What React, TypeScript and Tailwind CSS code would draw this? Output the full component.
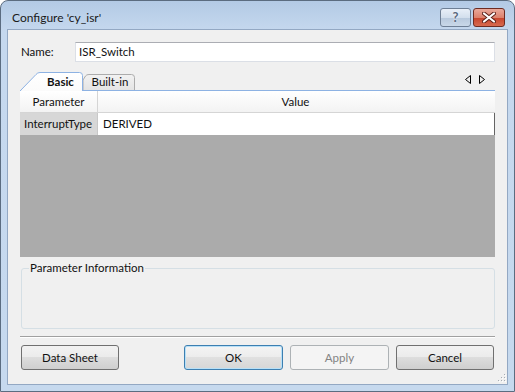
import React from "react";

function Grip() {
  const pts = [
    [7, 1],
    [7, 4],
    [4, 4],
    [7, 7],
    [4, 7],
    [1, 7],
  ];
  return (
    <svg width="10" height="10" viewBox="0 0 10 10">
      {pts.map(([x, y], i) => (
        <g key={i}>
          <rect x={x + 1} y={y + 1} width="1" height="1" fill="#ffffff" />
          <rect x={x} y={y} width="1" height="1" fill="#a6acb3" />
        </g>
      ))}
    </svg>
  );
}

export default function App() {
  return (
    <div className="w-[515px] h-[392px] font-['Lato',sans-serif] text-[11.5px] leading-none text-[#111]">
      <div className="relative w-full h-full rounded-t-[8px] border border-[#5b6c80] bg-[linear-gradient(to_bottom,#b3cae5_0px,#c5d8ee_30px,#c6d9ee_100%)] flex flex-col">
        {/* Title bar */}
        <div className="h-[28px] flex items-center pt-[5px] pl-[11px] pr-[9px]">
          <span className="flex-1 text-[12px] text-[#1a1a1a]">Configure 'cy_isr'</span>
          <div className="flex gap-[2px] items-center">
            <div className="w-[31px] h-[19px] rounded-[3px] border border-[#6e7f95] bg-[linear-gradient(to_bottom,#e8eff8_0%,#d3dfed_50%,#b7c8dc_51%,#c9d8e9_100%)] flex items-center justify-center text-[13px] font-bold text-[#5a6a80] [text-shadow:0_0_2px_#ffffff]">
              ?
            </div>
            <div className="w-[32px] h-[19px] rounded-[3px] border border-[#6e2b21] bg-[linear-gradient(to_bottom,#eaa99b_0%,#dd826d_50%,#c7442c_51%,#d76a4f_100%)] flex items-center justify-center">
              <svg width="14" height="11" viewBox="0 0 14 11">
                <path d="M2,1.5 L12,9.5 M12,1.5 L2,9.5" stroke="#5b2018" strokeWidth="4" strokeLinecap="round" />
                <path d="M2,1.5 L12,9.5 M12,1.5 L2,9.5" stroke="#ffffff" strokeWidth="2.2" strokeLinecap="round" />
              </svg>
            </div>
          </div>
        </div>

        {/* Client area */}
        <div className="relative flex-1 mx-[6px] mb-[6px] border border-[#93a8c3] bg-[#f0f0f0] flex flex-col px-[12px]">
          {/* Name row */}
          <div className="mt-[12px] flex items-center h-[20px]">
            <span className="w-[55px] pl-[1px]">Name:</span>
            <div className="flex-1 h-[20px] border border-[#dbdfe6] border-t-[#abadb3] bg-white flex items-center pl-[3px]">
              ISR_Switch
            </div>
          </div>

          {/* Tab strip */}
          <div className="mt-[10px] h-[19px] flex items-end border-b border-[#8db2e3]">
            <div className="relative z-10 w-[63px] h-[19px] mb-[-1px] flex items-center justify-center pl-[20px] pr-[2px] font-bold">
              <svg className="absolute inset-0" width="63" height="19" viewBox="0 0 63 19">
                <defs>
                  <linearGradient id="tb" x1="0" y1="0" x2="0" y2="1">
                    <stop offset="0" stopColor="#ffffff" />
                    <stop offset="1" stopColor="#fbfbfb" />
                  </linearGradient>
                </defs>
                <path
                  d="M0.5,19 L16,2.5 Q17.5,0.5 20,0.5 L59.5,0.5 Q62.5,0.5 62.5,3.5 L62.5,19 Z"
                  fill="url(#tb)"
                />
                <path
                  d="M0.5,18.5 L16,2.5 Q17.5,0.5 20,0.5 L59.5,0.5 Q62.5,0.5 62.5,3.5 L62.5,19"
                  fill="none"
                  stroke="#8db2e3"
                />
              </svg>
              <span className="relative">Basic</span>
            </div>
            <div className="relative w-[52px] h-[16px] flex items-center justify-center pl-[2px]">
              <svg className="absolute inset-0" width="52" height="16" viewBox="0 0 52 16">
                <defs>
                  <linearGradient id="tg" x1="0" y1="0" x2="0" y2="1">
                    <stop offset="0" stopColor="#f2f2f2" />
                    <stop offset="1" stopColor="#e4e4e4" />
                  </linearGradient>
                </defs>
                <path
                  d="M0,16 L0,6 L2.5,2 Q3.5,0.5 6,0.5 L48.5,0.5 Q51.5,0.5 51.5,3.5 L51.5,16"
                  fill="url(#tg)"
                  stroke="#acacac"
                />
              </svg>
              <span className="relative">Built-in</span>
            </div>
            <div className="flex-1" />
            <div className="flex items-center gap-[8px] mb-[6px] mr-[10px]">
              <svg width="6" height="9" viewBox="0 0 6 9">
                <path d="M5.5,0.5 L0.5,4.5 L5.5,8.5 Z" fill="none" stroke="#000" strokeWidth="1" />
              </svg>
              <svg width="6" height="9" viewBox="0 0 6 9">
                <path d="M0.5,0.5 L5.5,4.5 L0.5,8.5 Z" fill="none" stroke="#000" strokeWidth="1" />
              </svg>
            </div>
          </div>

          {/* Table */}
          <div className="h-[166px] flex flex-col bg-[#ababab]">
            <div className="h-[22px] flex bg-[linear-gradient(to_bottom,#ffffff,#f3f3f3)] border-b border-[#d5d5d5]">
              <div className="w-[78px] border-r border-[#d5d5d5] flex items-center justify-center">Parameter</div>
              <div className="flex-1 flex items-center justify-center pr-[2px]">Value</div>
            </div>
            <div className="h-[22px] flex">
              <div className="w-[78px] bg-[#d7d7d7] border-r border-[#c8c8c8] flex items-center pl-[4px]">InterruptType</div>
              <div className="flex-1 bg-white border-r border-[#646464] flex items-center pl-[5px]">DERIVED</div>
            </div>
            <div className="flex-1" />
          </div>

          {/* Parameter Information group */}
          <fieldset className="mt-[5px] h-[67px] border border-[#d5dfe5] rounded-[3px] ml-[1px] px-[7px]">
            <legend className="px-[1px] leading-[12px]">Parameter Information</legend>
          </fieldset>

          {/* Separator */}
          <div className="mt-[7px] h-[2px] border-t border-[#a0a0a0] border-b border-b-white" />

          {/* Buttons */}
          <div className="mt-[7px] flex items-center">
            <div className="ml-[1px] w-[98px] h-[25px] rounded-[3px] border border-[#707070] bg-[linear-gradient(to_bottom,#f2f2f2_0%,#ebebeb_50%,#dddddd_50%,#cfcfcf_100%)] flex items-center justify-center">
              Data Sheet
            </div>
            <div className="flex-1" />
            <div className="w-[99px] h-[25px] rounded-[3px] border border-[#3c7fb1] shadow-[inset_0_0_0_1px_#b8e0f7] bg-[linear-gradient(to_bottom,#f4f4f4_0%,#ececec_50%,#e0e0e0_50%,#d6d6d6_100%)] flex items-center justify-center">
              OK
            </div>
            <div className="ml-[7px] w-[99px] h-[25px] rounded-[3px] border border-[#adb2b5] bg-[#f4f4f4] text-[#838383] flex items-center justify-center">
              Apply
            </div>
            <div className="ml-[7px] mr-[1px] w-[98px] h-[25px] rounded-[3px] border border-[#707070] bg-[linear-gradient(to_bottom,#f2f2f2_0%,#ebebeb_50%,#dddddd_50%,#cfcfcf_100%)] flex items-center justify-center">
              Cancel
            </div>
          </div>

          <div className="absolute right-[0px] bottom-[1px]">
            <Grip />
          </div>
        </div>
      </div>
    </div>
  );
}
